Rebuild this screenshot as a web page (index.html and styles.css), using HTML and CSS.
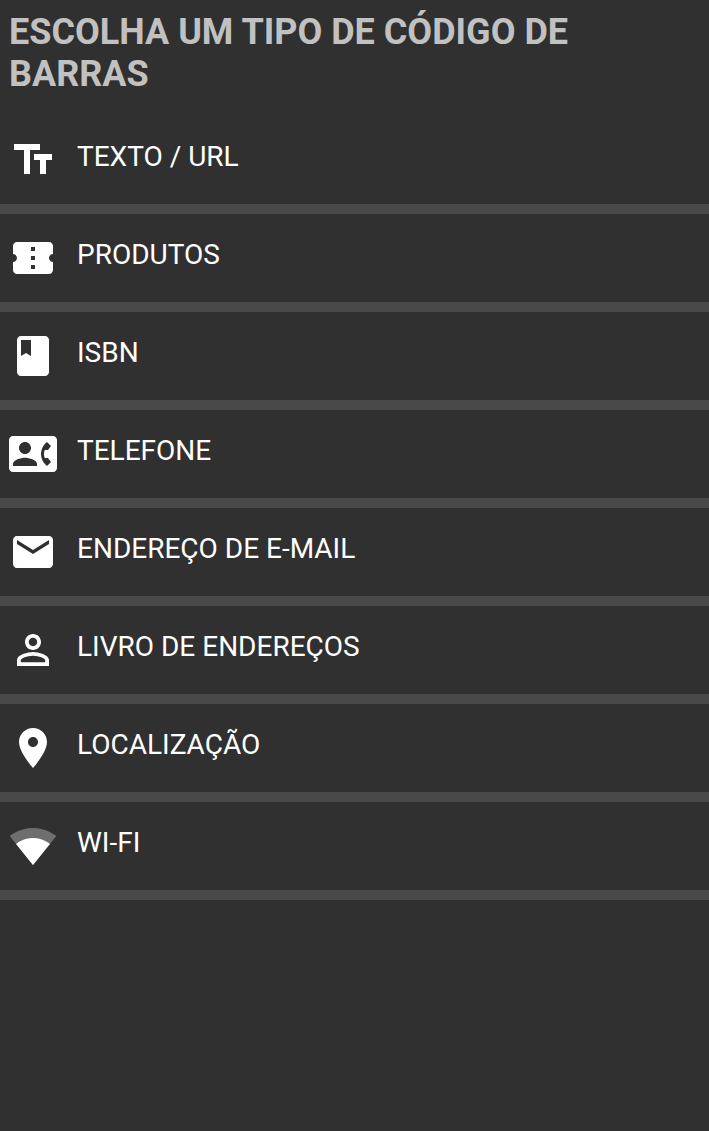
FILE: index.html
```html
<!DOCTYPE html>
<html lang="pt-BR">
<head>
    <meta charset="UTF-8">
    <meta name="viewport" content="width=device-width, initial-scale=1.0">
    <title>Código de barras</title>
    <link rel="stylesheet" href="styles.css">
</head>
<body>
    <main>
        <h1 class="title">ESCOLHA UM TIPO DE CÓDIGO DE BARRAS</h1>
        <ul class="types">
            <li>
                <button type="button" class="type">
                    <svg class="icon" viewBox="0 0 24 24" aria-hidden="true"><path d="M2.5 4v3h5v12h3V7h5V4h-13zm19 5h-9v3h3v7h3v-7h3V9z"/></svg>
                    <span>TEXTO / URL</span>
                </button>
            </li>
            <li>
                <button type="button" class="type">
                    <svg class="icon" viewBox="0 0 24 24" aria-hidden="true"><path d="M22 10V6c0-1.11-.9-2-2-2H4c-1.1 0-1.99.89-1.99 2v4c1.1 0 1.99.9 1.99 2s-.89 2-2 2v4c0 1.1.9 2 2 2h16c1.1 0 2-.9 2-2v-4c-1.1 0-2-.9-2-2s.9-2 2-2zm-9 7.5h-2v-2h2v2zm0-4.5h-2v-2h2v2zm0-4.5h-2v-2h2v2z"/></svg>
                    <span>PRODUTOS</span>
                </button>
            </li>
            <li>
                <button type="button" class="type">
                    <svg class="icon" viewBox="0 0 24 24" aria-hidden="true"><path d="M18 2H6c-1.1 0-2 .9-2 2v16c0 1.1.9 2 2 2h12c1.1 0 2-.9 2-2V4c0-1.1-.9-2-2-2zM6 4h5v8l-2.5-1.5L6 12V4z"/></svg>
                    <span>ISBN</span>
                </button>
            </li>
            <li>
                <button type="button" class="type">
                    <svg class="icon" viewBox="0 0 24 24" aria-hidden="true"><path d="M22 3H2C.9 3 0 3.9 0 5v14c0 1.1.9 2 2 2h20c1.1 0 1.99-.9 1.99-2L24 5c0-1.1-.9-2-2-2zM8 6c1.66 0 3 1.34 3 3s-1.34 3-3 3-3-1.34-3-3 1.34-3 3-3zm6 12H2v-1c0-2 4-3.1 6-3.1s6 1.1 6 3.1v1zm3.85-4h1.64L21 16l-1.99 1.99c-1.31-.98-2.28-2.38-2.73-3.99-.18-.64-.28-1.31-.28-2s.1-1.36.28-2c.45-1.62 1.42-3.01 2.73-3.99L21 8l-1.51 2h-1.64c-.22.63-.35 1.3-.35 2s.13 1.37.35 2z"/></svg>
                    <span>TELEFONE</span>
                </button>
            </li>
            <li>
                <button type="button" class="type">
                    <svg class="icon" viewBox="0 0 24 24" aria-hidden="true"><path d="M20 4H4c-1.1 0-1.99.9-1.99 2L2 18c0 1.1.9 2 2 2h16c1.1 0 2-.9 2-2V6c0-1.1-.9-2-2-2zm0 4l-8 5-8-5V6l8 5 8-5v2z"/></svg>
                    <span>ENDEREÇO DE E-MAIL</span>
                </button>
            </li>
            <li>
                <button type="button" class="type">
                    <svg class="icon" viewBox="0 0 24 24" aria-hidden="true"><path d="M12 5.9c1.16 0 2.1.94 2.1 2.1s-.94 2.1-2.1 2.1S9.9 9.16 9.9 8s.94-2.1 2.1-2.1m0 9c2.97 0 6.1 1.46 6.1 2.1v1.1H5.9V17c0-.64 3.13-2.1 6.1-2.1M12 4C9.79 4 8 5.79 8 8s1.79 4 4 4 4-1.79 4-4-1.79-4-4-4zm0 9c-2.67 0-8 1.34-8 4v3h16v-3c0-2.66-5.33-4-8-4z"/></svg>
                    <span>LIVRO DE ENDEREÇOS</span>
                </button>
            </li>
            <li>
                <button type="button" class="type">
                    <svg class="icon" viewBox="0 0 24 24" aria-hidden="true"><path d="M12 2C8.13 2 5 5.13 5 9c0 5.25 7 13 7 13s7-7.75 7-13c0-3.87-3.13-7-7-7zm0 9.5c-1.38 0-2.5-1.12-2.5-2.5s1.12-2.5 2.5-2.5 2.5 1.12 2.5 2.5-1.12 2.5-2.5 2.5z"/></svg>
                    <span>LOCALIZAÇÃO</span>
                </button>
            </li>
            <li>
                <button type="button" class="type">
                    <svg class="icon" viewBox="0 0 24 24" aria-hidden="true">
                        <path fill-opacity=".3" d="M12.01 21.49L23.64 7c-.45-.34-4.93-4-11.64-4C5.28 3 .81 6.66.36 7l11.63 14.49.01.01.01-.01z"/>
                        <path d="M3.53 10.95l8.46 10.54.01.01.01-.01 8.46-10.54C20.04 10.62 16.81 8 12 8c-4.81 0-8.04 2.62-8.47 2.95z"/>
                    </svg>
                    <span>WI-FI</span>
                </button>
            </li>
        </ul>
    </main>
</body>
</html>
```
FILE: styles.css
```css
body {
    margin: 0;
    background: #303030;
    color: #fff;
    font-family: Roboto, Arial, sans-serif;
}
.title {
    margin: 0;
    padding: 11px 9px 21px;
    color: #c1c1c1;
    font-size: 36px;
    font-weight: bold;
    line-height: 42px;
}
.types {
    margin: 0;
    padding: 0;
    list-style: none;
}
.types li {
    border-bottom: 10px solid #494949;
}
.type {
    display: flex;
    align-items: flex-start;
    gap: 20px;
    width: 100%;
    padding: 20px 9px;
    border: none;
    background: none;
    color: inherit;
    font-family: inherit;
    font-size: 28px;
    line-height: 42px;
    text-align: left;
    cursor: pointer;
}
.icon {
    flex: none;
    width: 48px;
    height: 48px;
    fill: currentColor;
}
```
